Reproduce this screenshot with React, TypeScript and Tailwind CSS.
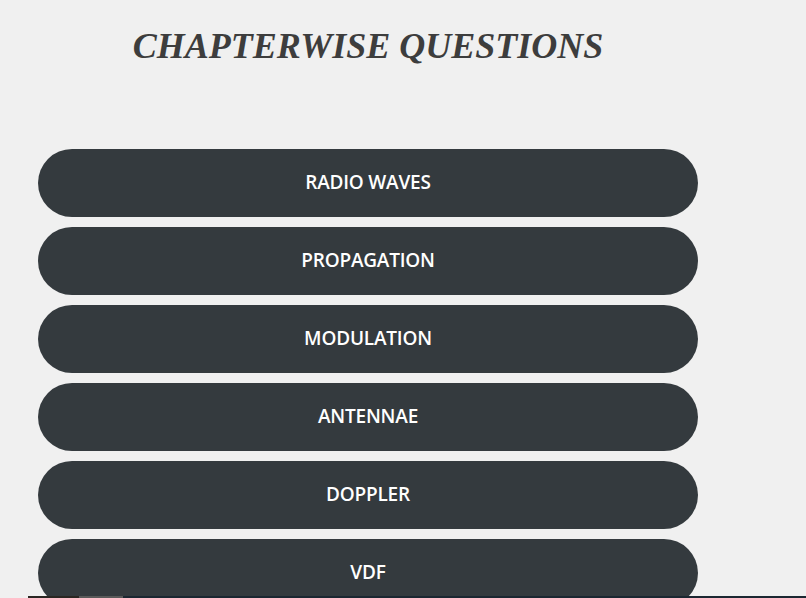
import React from 'react';

const chapters = ['RADIO WAVES', 'PROPAGATION', 'MODULATION', 'ANTENNAE', 'DOPPLER', 'VDF'];

export default function App() {
    return (
        <div className="relative w-[806px] h-[598px] overflow-hidden bg-[#f0f0f0] flex flex-col">
            <div className="w-[660px] ml-[38px] flex flex-col">
                {/* Heading */}
                <h1
                    className="h-[94px] pt-[24px] text-center text-[36px] font-bold italic leading-[44px] text-[#3d3d3d]"
                    style={{ fontFamily: '"Liberation Serif", serif' }}
                >
                    CHAPTERWISE QUESTIONS
                </h1>

                {/* Chapter buttons */}
                <div className="mt-[55px] flex flex-col gap-[10px]">
                    {chapters.map(name => (
                        <button
                            key={name}
                            className="h-[68px] w-full shrink-0 rounded-full bg-[#343a3e] pb-[2px] text-white text-[19px] font-semibold tracking-[-0.2px]"
                            style={{ fontFamily: '"Open Sans", sans-serif' }}
                        >
                            {name}
                        </button>
                    ))}
                </div>
            </div>

            {/* strip of the next section peeking in at the bottom */}
            <div className="absolute bottom-0 left-[28px] right-0 h-[2px] flex bg-[#1b2731]">
                <div className="w-[51px] bg-[#2a2622]" />
                <div className="w-[44px] bg-[#5a5a5a]" />
            </div>
        </div>
    );
}
